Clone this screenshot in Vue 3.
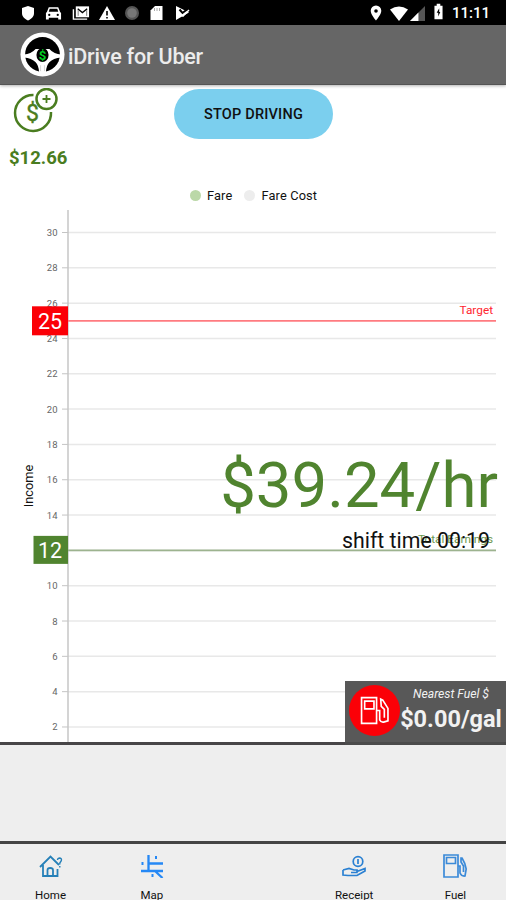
<template>
  <div class="screen">
    <!-- status bar -->
    <div class="status-bar">
      <div class="status-left">
        <svg viewBox="0 0 16 16"><path d="M8 1l6 2v5c0 4-3 6-6 7.500C5 14 2 12 2 8V3z" fill="#fff" /></svg>
        <svg class="car" viewBox="0 0 18 16">
          <path d="M4 2h10l2 5 1 1v7h-3v-2H4v2H1V8l1-1z" fill="#fff" />
          <path d="M5 3.500h8l1 3.200H4z" fill="#000" />
          <circle cx="4.500" cy="10" r="1.200" /><circle cx="13.500" cy="10" r="1.200" />
        </svg>
        <svg class="mail" viewBox="0 0 19 16">
          <path d="M1.500 4v10.500H16" fill="none" stroke="#fff" stroke-width="1.500" />
          <rect x="4" y="1" width="14" height="11.500" fill="#fff" />
          <path d="M6 3.500l5 4 5-4" fill="none" stroke="#000" stroke-width="1.400" />
          <path d="M6.500 5v6M15.500 5v6" fill="none" stroke="#777" />
        </svg>
        <svg viewBox="0 0 16 16">
          <path d="M8 1l8 14H0z" fill="#fff" />
          <path d="M7.200 6h1.600v4.500H7.200zM7.200 12h1.600v1.500H7.200z" />
        </svg>
        <svg viewBox="0 0 16 16"><circle cx="8" cy="8" r="7" fill="#555" /><circle cx="8" cy="8" r="4.800" fill="#777" /></svg>
        <svg viewBox="0 0 16 16">
          <path d="M6 1h7.500v14h-12V5.500z" fill="#fff" />
          <path d="M5.500 3v3M8 3v3M10.500 3v3" stroke="#aaa" />
        </svg>
        <svg viewBox="0 0 16 16">
          <path d="M1 1l13 6.500L1 15z" fill="#fff" />
          <path d="M4.500 4.500l3 3.500L14 3" fill="none" stroke="#000" stroke-width="2" />
          <path d="M6 10l2 1 6-6" fill="none" stroke="#fff" stroke-width="1.500" />
        </svg>
      </div>
      <div class="status-right">
        <svg class="pin" viewBox="0 0 12 16"><path d="M6 .5a5.300 5.300 0 0 0-5.300 5.300C.7 9.800 6 15.500 6 15.500s5.300-5.700 5.300-9.700A5.300 5.300 0 0 0 6 .5z" fill="#fff" /><circle cx="6" cy="6" r="1.800" /></svg>
        <svg class="wifi" viewBox="0 0 18 15"><path d="M0 3.500Q9-2.500 18 3.500L9 15z" fill="#fff" /></svg>
        <svg class="signal" viewBox="0 0 16 16"><path d="M16 0v16H0z" fill="#555" /><path d="M9 7v9H0z" fill="#fff" /></svg>
        <svg class="battery" viewBox="0 0 10 17"><path d="M3 0h4v2h2.500v15H.5V2H3z" fill="#fff" /><path d="M5.800 5L3 10h1.700v4L7 9H5.800z" /></svg>
        <span class="clock">11:11</span>
      </div>
    </div>

    <!-- app bar -->
    <header class="app-bar">
      <svg class="logo" viewBox="0 0 46 46">
        <circle cx="23" cy="23" r="22.500" fill="#fff" />
        <circle cx="23" cy="23" r="17.800" />
        <path d="M4 23q7 0 12-5.500h14q5 5.500 12 5.500v3q-8 .5-12 5-3 3-3.500 10h-7q-.5-7-3.500-10-4-4.500-12-5z" fill="#fff" />
        <path d="M21 34v6M25 34v6" stroke="#bbb" stroke-width=".6" />
        <ellipse cx="23" cy="23.500" rx="6.200" ry="7.200" />
        <text x="23" y="28.300" text-anchor="middle" fill="#0c2" font-size="13.500" font-weight="700">$</text>
      </svg>
      <h1>iDrive for Uber</h1>
    </header>

    <main class="dashboard">
      <div class="top-row">
        <div class="earned">
          <svg viewBox="0 0 46 46" fill="none" stroke="#4a7d20" stroke-width="2.500">
            <path d="M20.500 7A18 18 0 1 0 38 24" />
            <circle cx="33.500" cy="11" r="10" />
            <path d="M33.500 7v8M29.500 11h8" stroke-width="1.800" />
            <text x="19.500" y="33" text-anchor="middle" font-size="23" fill="#4a7d20" stroke-width=".4">$</text>
          </svg>
          <strong>$12.66</strong>
        </div>
        <button class="stop-btn">STOP DRIVING</button>
      </div>

      <div class="legend">
        <span class="dot fare"></span><span>Fare</span>
        <span class="dot cost"></span><span>Fare Cost</span>
      </div>

      <svg class="chart" viewBox="0 0 506 537">
        <g v-for="t in ticks" :key="t">
          <line x1="68" x2="496" :y1="yPos(t)" :y2="yPos(t)" stroke="#e8e8e8" stroke-width="1.500" />
          <line x1="62" x2="68" :y1="yPos(t)" :y2="yPos(t)" stroke="#c4c4c4" />
          <text v-if="t !== 12" x="57.500" :y="yPos(t) + 3.500" text-anchor="end" font-size="9.500" fill="#666">{{ t }}</text>
        </g>
        <line x1="68" x2="68" y1="5" y2="537" stroke="#c6c6c6" stroke-width="1.500" />
        <text x="0" y="0" transform="translate(32.500 281) rotate(-90)" text-anchor="middle" font-size="12.800" fill="#111">Income</text>
        <g v-for="m in markers" :key="m.value">
          <line x1="68" x2="496" :y1="yPos(m.value)" :y2="yPos(m.value)" :stroke="m.line" stroke-width="1.800" />
          <text :x="493" :y="yPos(m.value) - 7" text-anchor="end" font-size="11.800" :fill="m.text">{{ m.label }}</text>
          <rect :x="m.left" :y="yPos(m.value) - 14.500" :width="68 - m.left" :height="m.height" :fill="m.color" />
          <text x="50" :y="yPos(m.value) + 8" text-anchor="middle" font-size="21.500" fill="#fff">{{ m.value }}</text>
        </g>
      </svg>

      <div class="rate">$39.24/hr</div>
      <div class="shift">shift time 00:19</div>

      <div class="fuel-card">
        <span class="fuel-badge">
          <svg viewBox="0 0 28 28" fill="none" stroke="#fff" stroke-width="1.600">
            <path d="M1.500 1.500h14.500v25H1.500zM4.500 5h9v7.500h-9zM16 14h3v9q1.500 3 4.500 2l3.500-1V12l-5-8-2-1 .5 7 3 3v8" />
          </svg>
        </span>
        <div class="fuel-info">
          <em>Nearest Fuel $</em>
          <strong>$0.00/gal</strong>
        </div>
      </div>
    </main>

    <div class="banner"></div>

    <nav class="tabs">
      <div class="tab">
        <svg viewBox="0 0 24 24" fill="none" stroke="#2680b8" stroke-width="1.800">
          <path d="M1 13L11.500 2.500 20 11M4 11v11h4.500v-6q0-2 2.700-2t2.800 2v6h4.500v-7M8.500 22h5" />
          <path d="M18.500 6q.2-2 2.300-2 2.200.5 1.500 2.700L20.800 9v1.500M20.800 12v1.500" stroke-width="1.400" />
        </svg>
        <span>Home</span>
      </div>
      <div class="tab">
        <svg viewBox="0 0 24 24" fill="none" stroke="#2588f5" stroke-width="2.300">
          <path d="M8.500 1v16M8.500 9.500H23M1 17h22M15 17l7.500 7" />
          <path d="M16 2v3M2.500 8v3M12.500 20v3" stroke-width="2" />
        </svg>
        <span>Map</span>
      </div>
      <div class="tab"></div>
      <div class="tab">
        <svg viewBox="0 0 24 24" fill="none" stroke="#2a80d2" stroke-width="1.700">
          <circle cx="16" cy="7.500" r="4.800" />
          <path d="M16 5v5" />
          <path d="M1 16l6-1.500 5 1.500h3v2.500H9M15 17.500l8-3V17l-8 4.500H6L1 21v-5" />
        </svg>
        <span>Receipt</span>
      </div>
      <div class="tab">
        <svg viewBox="0 0 24 24" fill="none" stroke="#3b8ad8" stroke-width="1.700">
          <path d="M1 1h14v22H1zM3.500 3.500h9v6h-9zM15 12h2v7q1.500 3.500 5 3l1.200-7q-1-6-4.200-11L18 4v4l2.500 4v6" />
        </svg>
        <span>Fuel</span>
      </div>
    </nav>
  </div>
</template>

<script setup>
const ticks = Array.from({ length: 15 }, (_, i) => 30 - i * 2)

const markers = [
  { value: 25, label: 'Target', color: '#fb0007', line: '#ff7b80', text: '#ff2530', left: 32, height: 29 },
  { value: 12, label: 'Total Earnings', color: '#50842f', line: '#9db38f', text: '#6c984f', left: 33.5, height: 28 }
]

// value on the income axis -> y inside the chart
const yPos = (v) => 27.5 + (30 - v) * 17.66
</script>

<style>
body {
  margin: 0;
}
</style>

<style scoped>
.screen {
  width: 506px;
  height: 900px;
  overflow: hidden;
  display: flex;
  flex-direction: column;
  background: #fff;
  font-family: Roboto, "Liberation Sans", sans-serif;
  color: #111;
}

.screen > * { flex-shrink: 0; }

.status-bar {
  height: 25px;
  box-sizing: border-box;
  padding: 1px 18px 0 20px;
  background: #000;
  display: flex;
  justify-content: space-between;
  align-items: center;
}

.status-left,
.status-right {
  display: flex;
  align-items: center;
}

.status-left { gap: 9.3px; }
.status-left svg { width: 16px; height: 16px; }
.status-left .car { width: 17px; }
.status-left .mail { width: 18px; }

.pin { width: 12px; height: 16px; margin-right: 8px; }
.wifi { width: 18px; height: 15px; margin-right: 2px; }
.signal { width: 15px; height: 15px; margin-right: 9px; }
.battery { width: 9px; height: 17px; margin: -3px 9px 0 0; }

.clock {
  width: 37px;
  margin-right: -1px;
  color: #fff;
  font-size: 15px;
  font-weight: 500;
  line-height: 20px;
}

.app-bar {
  height: 60px;
  box-sizing: border-box;
  padding-left: 20px;
  display: flex;
  align-items: center;
  gap: 3px;
  background: #666;
  border-bottom: 1px solid #555;
  box-shadow: 0 1px 3px rgba(0, 0, 0, 0.3);
}

.logo { width: 45px; height: 45px; }

.app-bar h1 {
  margin: 3px 0 0;
  font-size: 21.5px;
  font-weight: 500;
  letter-spacing: -0.2px;
  color: #ececec;
}

.dashboard {
  position: relative;
  height: 660px;
  box-sizing: border-box;
  border-bottom: 3px solid #474547;
}

.top-row {
  height: 100px;
  display: grid;
  grid-template-columns: 174px 159px;
}

.earned {
  padding: 3px 0 0 9px;
  display: flex;
  flex-direction: column;
  align-items: flex-start;
}

.earned svg { width: 46px; height: 46px; margin-left: 4px; }

.earned strong {
  margin-top: 12px;
  font-size: 18.5px;
  line-height: 24px;
  font-weight: 700;
  color: #4a7d20;
}

.stop-btn {
  height: 50px;
  margin-top: 4px;
  padding: 0;
  border: none;
  border-radius: 25px;
  background: #7bcfee;
  color: #111;
  font-family: inherit;
  font-size: 14.5px;
  font-weight: 500;
  letter-spacing: 0.2px;
}

.legend {
  height: 20px;
  padding-left: 190px;
  display: flex;
  align-items: center;
  font-size: 12.8px;
  letter-spacing: 0.15px;
}

.dot {
  width: 11px;
  height: 11px;
  margin-right: 6px;
  border-radius: 50%;
}

.dot.fare { background: #bbd8a8; }
.dot.cost { background: #ededed; margin-left: 12px; }

.chart {
  display: block;
  width: 506px;
  height: 537px;
}

.rate {
  position: absolute;
  right: 8px;
  top: 365px;
  font-size: 63.5px;
  line-height: 72px;
  color: #50842f;
  white-space: nowrap;
}

.shift {
  position: absolute;
  right: 16px;
  top: 443px;
  font-size: 21.3px;
  line-height: 26px;
  white-space: nowrap;
}

.fuel-card {
  position: absolute;
  right: 0;
  bottom: -3px;
  width: 161px;
  height: 64px;
  box-sizing: border-box;
  padding: 4px 0 0 4px;
  display: flex;
  background: #585858;
  border-bottom: 3px solid #4b4b4b;
}

.fuel-badge {
  width: 51px;
  height: 51px;
  flex-shrink: 0;
  border-radius: 50%;
  background: #fb0007;
  display: flex;
  align-items: center;
  justify-content: center;
}

.fuel-badge svg { width: 29px; height: 29px; }

.fuel-info {
  flex: 1;
  padding-right: 4px;
  display: flex;
  flex-direction: column;
  align-items: center;
  color: #f2f2f2;
  white-space: nowrap;
}

.fuel-info em {
  font-size: 12.2px;
  line-height: 18px;
}

.fuel-info strong {
  font-size: 23.5px;
  line-height: 32px;
  font-weight: 700;
}

.banner {
  height: 96px;
  background: #eee;
}

.tabs {
  height: 59px;
  box-sizing: border-box;
  border-top: 3px solid #444;
  background: #eee;
  display: grid;
  grid-template-columns: repeat(5, 1fr);
  overflow: hidden;
}

.tab {
  padding-top: 10px;
  display: flex;
  flex-direction: column;
  align-items: center;
  gap: 10px;
  font-size: 11.5px;
  line-height: 15px;
}

.tab svg { width: 24px; height: 24px; flex-shrink: 0; }
</style>
